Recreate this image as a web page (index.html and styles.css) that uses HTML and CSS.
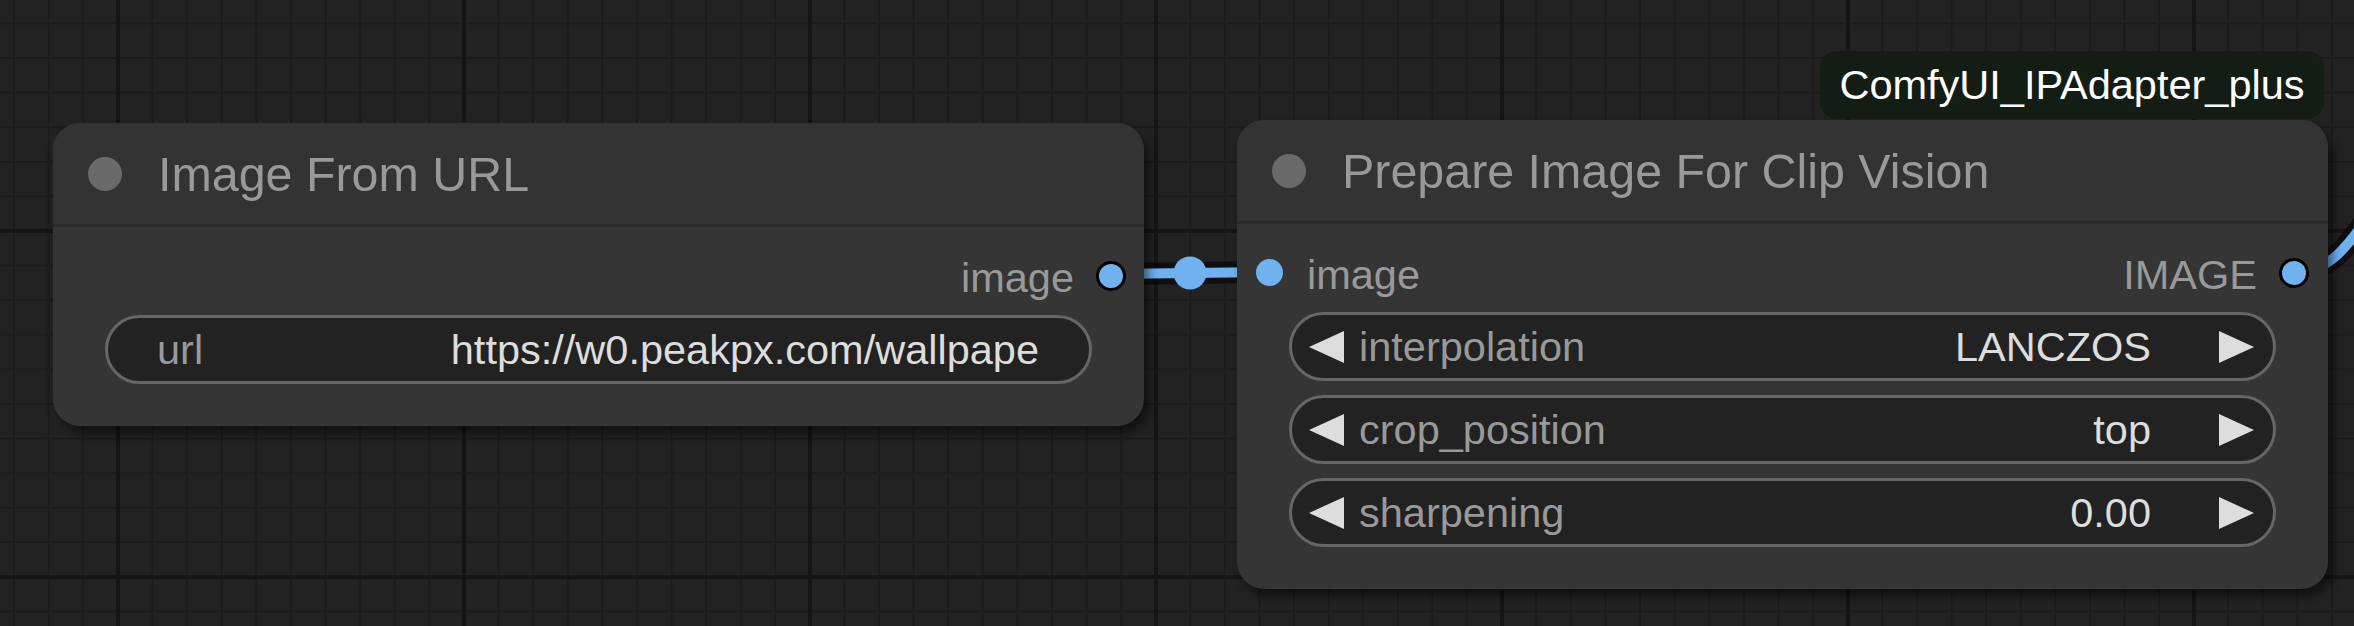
FILE: index.html
```html
<!DOCTYPE html>
<html lang="en">
<head>
<meta charset="utf-8">
<title>ComfyUI nodes</title>
<link rel="stylesheet" href="styles.css">
</head>
<body>
<div class="canvas">
  <svg class="links" width="2354" height="626" viewBox="0 0 2354 626">
    <path class="link-border" d="M1111 274 L1270 272"/>
    <path class="link-line" d="M1111 274 L1270 272"/>
    <circle class="link-mid" cx="1190" cy="273" r="16.5"/>
    <path class="link-border" d="M2294 272 C2330 272 2345 250 2380 200"/>
    <path class="link-line" d="M2294 272 C2330 272 2345 250 2380 200"/>
  </svg>

  <div class="node node-url">
    <div class="node-title">
      <span class="title-dot"></span>
      <span class="title-text">Image From URL</span>
    </div>
    <div class="node-body">
      <div class="slot-row slot-row-out">
        <span class="slot-label">image</span>
        <span class="dot dot-ring"></span>
      </div>
      <div class="widget">
        <span class="w-label w-label-text">url</span>
        <span class="w-value">https://w0.peakpx.com/wallpape</span>
      </div>
    </div>
  </div>

  <div class="badge">ComfyUI_IPAdapter_plus</div>

  <div class="node node-prep">
    <div class="node-title">
      <span class="title-dot"></span>
      <span class="title-text">Prepare Image For Clip Vision</span>
    </div>
    <div class="node-body">
      <div class="slot-row">
        <div class="slot-in">
          <span class="dot dot-in"></span>
          <span class="slot-label">image</span>
        </div>
        <div class="slot-out">
          <span class="slot-label">IMAGE</span>
          <span class="dot dot-ring"></span>
        </div>
      </div>
      <div class="widget combo">
        <span class="arrow arrow-left"></span>
        <span class="w-label">interpolation</span>
        <span class="w-value">LANCZOS</span>
        <span class="arrow arrow-right"></span>
      </div>
      <div class="widget combo">
        <span class="arrow arrow-left"></span>
        <span class="w-label">crop_position</span>
        <span class="w-value">top</span>
        <span class="arrow arrow-right"></span>
      </div>
      <div class="widget combo">
        <span class="arrow arrow-left"></span>
        <span class="w-label">sharpening</span>
        <span class="w-value">0.00</span>
        <span class="arrow arrow-right"></span>
      </div>
    </div>
  </div>
</div>
</body>
</html>
```

FILE: styles.css
```css
* { box-sizing: border-box; }

html, body {
  margin: 0;
  padding: 0;
  background: #222222;
}

.canvas {
  position: relative;
  width: 2354px;
  height: 626px;
  overflow: hidden;
  font-family: "Liberation Sans", Arial, sans-serif;
  background-color: #222222;
  background-image:
    linear-gradient(to right, #151515 4px, transparent 4px),
    linear-gradient(to bottom, #151515 4px, transparent 4px),
    linear-gradient(to right, #1b1b1b 2px, transparent 2px),
    linear-gradient(to bottom, #1b1b1b 2px, transparent 2px);
  background-size:
    346px 100%,
    100% 346px,
    34.6px 100%,
    100% 34.6px;
  background-position:
    116px 0,
    0 229px,
    13.2px 0,
    0 22.4px;
}

.links {
  position: absolute;
  left: 0;
  top: 0;
  z-index: 0;
}

.link-border {
  fill: none;
  stroke: rgba(0, 0, 0, 0.55);
  stroke-width: 22;
}

.link-line {
  fill: none;
  stroke: #70b1f0;
  stroke-width: 10;
}

.link-mid {
  fill: #70b1f0;
}

.node {
  position: absolute;
  z-index: 1;
  width: 1091px;
  background: #353535;
  border-radius: 27px;
  box-shadow: 5px 7px 10px rgba(0, 0, 0, 0.5);
  display: flex;
  flex-direction: column;
}

.node-url {
  left: 53px;
  top: 123px;
  height: 303px;
}

.node-prep {
  left: 1237px;
  top: 120px;
  height: 469px;
}

.node-title {
  height: 104px;
  background: #333333;
  border-bottom: 3px solid #2a2a2a;
  border-radius: 27px 27px 0 0;
  display: flex;
  align-items: center;
  padding-left: 35px;
  flex-shrink: 0;
}

.title-dot {
  width: 34px;
  height: 34px;
  border-radius: 50%;
  background: #6a6a6a;
  flex-shrink: 0;
}

.title-text {
  margin-left: 36px;
  padding-top: 2px;
  font-size: 48.4px;
  line-height: 1;
  color: #999999;
  white-space: nowrap;
}

.node-body {
  display: flex;
  flex-direction: column;
}

.slot-row {
  margin-top: 14px;
  height: 69px;
  display: flex;
  align-items: center;
  justify-content: space-between;
  padding: 0 19px 0 19px;
}

.slot-row-out {
  justify-content: flex-end;
  padding-right: 18px;
}

.slot-in,
.slot-out {
  display: flex;
  align-items: center;
}

.slot-in .slot-label {
  margin-left: 24px;
}

.slot-out .slot-label,
.slot-row-out .slot-label {
  margin-right: 22px;
}

.slot-label {
  padding-top: 4px;
  font-size: 41.5px;
  line-height: 1;
  color: #999999;
  white-space: nowrap;
}

.dot {
  display: block;
  border-radius: 50%;
  background: #70b1f0;
  flex-shrink: 0;
}

.dot-in {
  width: 27px;
  height: 27px;
}

.dot-ring {
  width: 30px;
  height: 30px;
  border: 3.5px solid #000000;
}

.widget {
  margin: 5px 52px 0 52px;
  height: 69px;
  border: 3px solid #666666;
  border-radius: 35px;
  background: #222222;
  display: flex;
  align-items: center;
  font-size: 41.5px;
  line-height: 1;
  white-space: nowrap;
}

.widget + .widget {
  margin-top: 14px;
}

.w-label {
  color: #999999;
}

.w-label-text {
  margin-left: 49px;
}

.w-value {
  margin-left: auto;
  color: #dddddd;
}

.widget:not(.combo) .w-value {
  margin-right: 50px;
}

.combo {
  padding: 0 19px 0 17px;
}

.combo .w-label {
  margin-left: 15px;
}

.combo .w-value {
  margin-right: 68px;
}

.arrow {
  display: block;
  width: 0;
  height: 0;
  border-top: 16.5px solid transparent;
  border-bottom: 16.5px solid transparent;
  flex-shrink: 0;
}

.arrow-left {
  border-right: 35px solid #dddddd;
}

.arrow-right {
  border-left: 35px solid #dddddd;
}

.badge {
  position: absolute;
  z-index: 2;
  left: 1820px;
  top: 51px;
  width: 504px;
  height: 68px;
  background: #141d14;
  border-radius: 17px;
  color: #ffffff;
  font-size: 41.5px;
  line-height: 1;
  display: flex;
  align-items: center;
  justify-content: center;
  white-space: nowrap;
}
```
